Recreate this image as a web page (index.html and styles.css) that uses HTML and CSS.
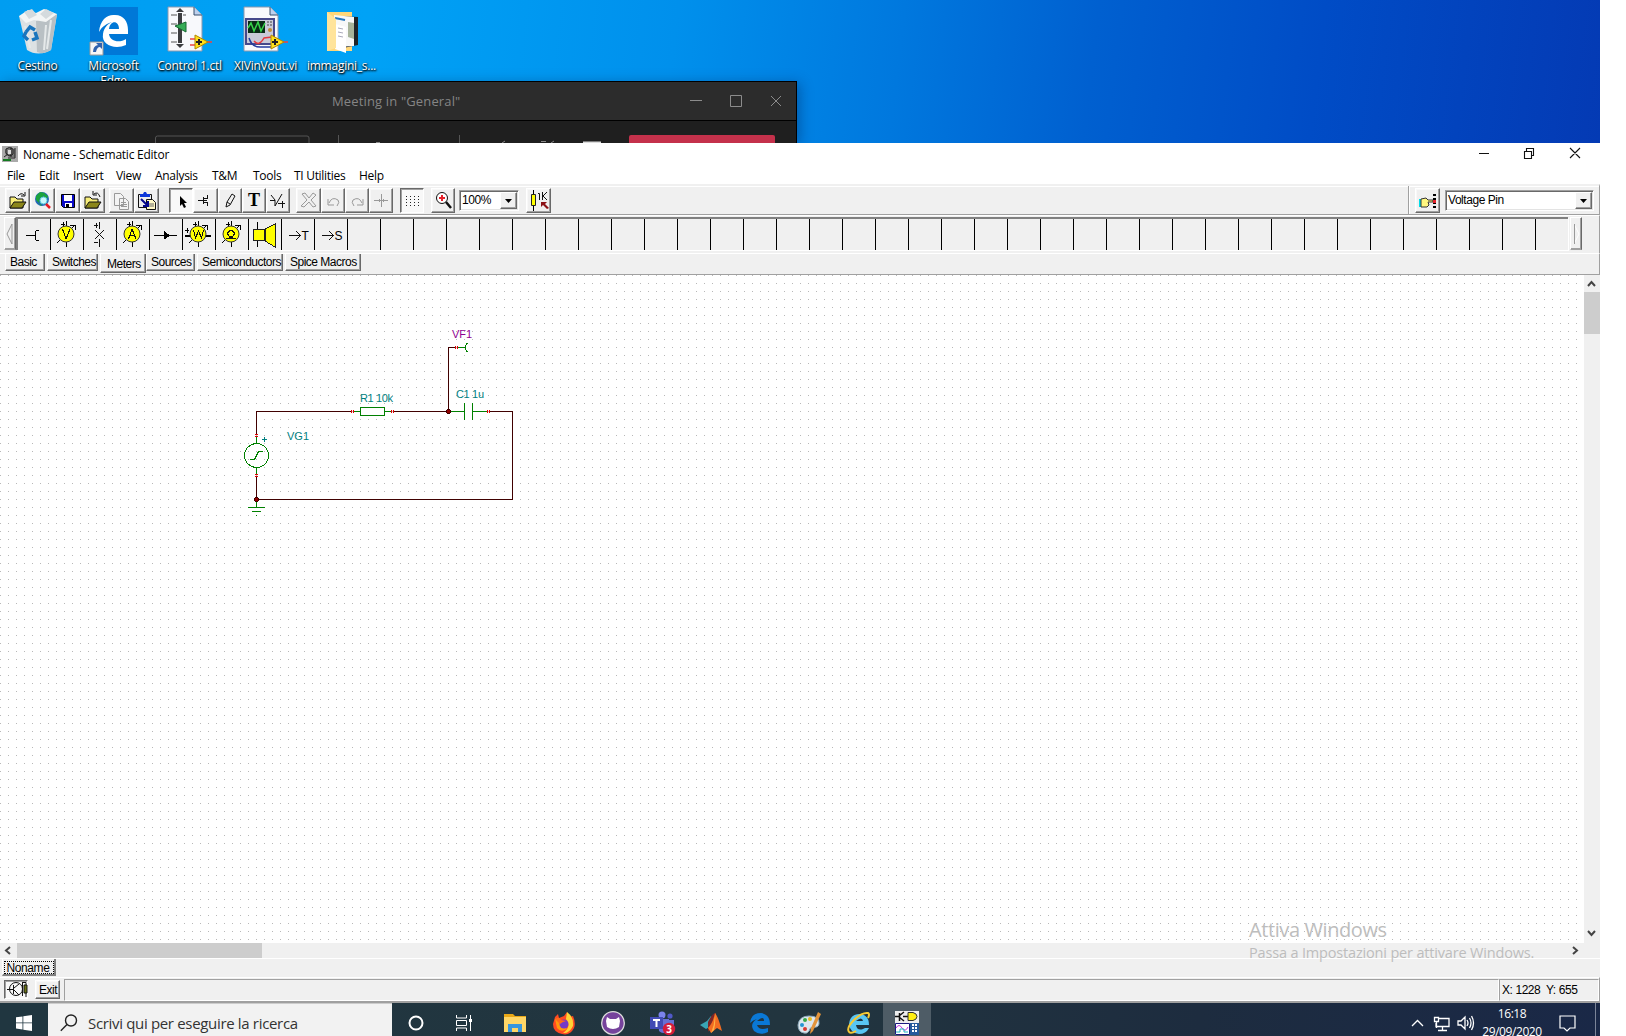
FILE: index.html
```html
<!DOCTYPE html>
<html lang="it">
<head>
<meta charset="utf-8">
<title>Noname - Schematic Editor</title>
<link rel="stylesheet" href="styles.css">
</head>
<body>
<div class="screen">
  <div class="desktop">
    <div class="shortcuts">
      <div class="shortcut"><svg viewBox="0 0 48 48"><path d="M5 9L43 7L37 43Q24 50 13 43Z" fill="#dce1e3"/><path d="M22 14L43 7L37 43Q30 48 23 45Z" fill="#b9c0c4"/><path d="M5 9L14 3L22 6L30 2L43 7L32 15L20 13L12 16Z" fill="#f3f5f5"/><path d="M10 5l8-3 5 6-8 4zM26 7l6-5 8 4-8 6z" fill="#d4dadd"/><path d="M11 19l5 22M32 18l-2 25M37 13l-4 29" stroke="#e5e9ea" stroke-width="2"/><path d="M12 25l4-5 5 3M21 25l2 6-5 2M14 33l-4-4 2-4" fill="none" stroke="#1975bd" stroke-width="3.500"/></svg><span>Cestino</span></div>
      <div class="shortcut"><svg viewBox="0 0 48 48"><path fill="#0078d7" d="M0 0h48v48H0z"/><path d="M9 25C10 12 18 7 25 8C34 8 38 15 38 23V27H19C20 35 30 36 36 32V38C25 43 11 38 13 27C14 20 18 17 22 15C18 16 12 19 9 25ZM19 22H29C29 13 20 13 19 22Z" fill="#fff"/><path d="M0 35h13v13H0z" fill="#f6f6f6" stroke="#999"/><path d="M3 45q0-6 5-7l-2-2h6v6l-2-2q-3 0-4 5z" fill="#3062ae"/></svg><span>Microsoft<br>Edge</span></div>
      <div class="shortcut"><svg viewBox="0 0 48 48"><path d="M2 0h26l8 8v36H2z" fill="#f8f9fc" stroke="#8d99ae"/><path d="M28 0v8h8" fill="#bed1ed" stroke="#38506f"/><path d="M5 8h6M5 17h6M5 26h6M5 35h6M17 8h3" stroke="#555"/><path d="M12 6h4v30h-4zM10 5l4-4 4 4zM10 37l4 4 4-4z" fill="#3c3d40"/><path d="M9 19l11-4v10z" fill="#36ad57" stroke="#176a32"/><path d="M24 32h7M24 38h6M40 35h6" stroke="#ed4242" stroke-width="1.5"/><path d="M29 28v14l13-7z" fill="#ffe11c" stroke="#b28800"/><path d="M30 35h6M33 32v6" stroke="#222" stroke-width="2"/></svg><span>Control 1.ctl</span></div>
      <div class="shortcut"><svg viewBox="0 0 48 48"><path d="M2 0h26l8 8v36H2z" fill="#f8f9fc" stroke="#8d99ae"/><path d="M28 0v8h8" fill="#bed1ed" stroke="#38506f"/><path d="M4 12h28v25H4z" fill="#c9cbd8" stroke="#46498b" stroke-width="2"/><path d="M6 14h17v12H6z" fill="#092c16"/><path d="M6 21l3-5 3 8 4-9 3 9 4-8" fill="none" stroke="#37d44b" stroke-width="1.5"/><path d="M25 15h5M25 18h5" stroke="#444" stroke-dasharray="2 1"/><circle cx="28" cy="23" r="2" fill="#c18c35"/><path d="M7 31q3 10 13 9h12" fill="none" stroke="#233b9e" stroke-width="1.5"/><path d="M12 34q5 6 10-3l8-1" fill="none" stroke="#e43a40" stroke-width="1.5"/><path d="M40 35h6" stroke="#ed4242" stroke-width="1.5"/><path d="M29 28v14l13-7z" fill="#ffe11c" stroke="#b28800"/><path d="M30 35h6M33 32v6" stroke="#222" stroke-width="2"/></svg><span>XIVinVout.vi</span></div>
      <div class="shortcut"><svg viewBox="0 0 48 48"><path d="M9 5h25v39H9z" fill="#ffd779"/><path d="M18 9l22 1v28l-20 4z" fill="#1f2429"/><path d="M16 8l20 2v29l-18 1z" fill="#f7f8f8"/><path d="M30 15l6 1v16l-6-2z" fill="#a8b49a"/><path d="M17 11l10 2" stroke="#2779c0" stroke-width="2"/><path d="M17 17l11 3v26l-11-4z" fill="#fff"/><path d="M20 21l5 1M20 25l5 1M20 29l5 1" stroke="#aab"/><path d="M9 5l9 7v29L9 44z" fill="#ffe49b"/></svg><span>immagini_s...</span></div>
    </div>
    <div class="meeting">
      <div class="meeting-title"><span>Meeting in "General"</span>
        <svg viewBox="0 0 92 14"><path d="M0 6.500h12M40.500 1.500h11v11h-11zM81 2l10 10M91 2L81 12" fill="none" stroke="#8c8c8c"/></svg>
      </div>
      <svg class="meeting-bar" viewBox="0 0 796 23"><path d="M155.500 23V17q0-2 2-2H307q2 0 2 2v6M338.500 14v9M459.500 14v9" fill="none" stroke="#555"/><path d="M629 23v-7q0-2 2-2h142q2 0 2 2v7z" fill="#c4314b"/><path d="M583 20.500h18v2h-18z" fill="#ddd"/><path d="M376 21.500h4M502 22l3-2M541 20.500h5M551 22l3-2" stroke="#888"/></svg>
    </div>
  </div>

  <div class="editor">
    <div class="titlebar">
      <svg class="app-icon" viewBox="0 0 16 16"><path d="M0 0h16v16H0z" fill="#aaa"/><path d="M3 5q1-4 5-3l5 1v8H8Q4 10 3 7z" fill="#777"/><path d="M4 3q3-3 7 0v5q-4 4-7-1zM9 1v10M13 2v10H6M2 11l4-3" stroke="#222" fill="none"/><path d="M6 4h3v4H6z" fill="#ddd"/><path d="M1 13h8v2H1z" fill="#137b20"/></svg>
      <span>Noname - Schematic Editor</span>
      <svg class="window-buttons" viewBox="0 0 102 14"><path d="M0 7.500h10M45.500 5.500h7v7h-7zM47.500 5V2.500h7v7H53M91 2l10 10M101 2L91 12" fill="none" stroke="#111" stroke-width="1.100"/></svg>
    </div>
    <div class="menu"><span>File</span><span>Edit</span><span>Insert</span><span>View</span><span>Analysis</span><span>T&amp;M</span><span>Tools</span><span>TI Utilities</span><span>Help</span></div>
    <div class="toolbar">
      <div class="group files">
        <i class="btn"><svg viewBox="0 0 24 24"><path d="M4 9h5l2 2h6v9H4z" fill="#f7ed78" stroke="#111"/><path d="M4 20l4-6h12l-4 6z" fill="#8b861a" stroke="#111"/><path d="M12 8q3-4 6-1M19 4v4h-4" fill="none" stroke="#111"/></svg></i>
        <i class="btn"><svg viewBox="0 0 24 24"><circle cx="11" cy="11" r="7" fill="#2466bc"/><path d="M5 8l4-4 5 1-2 4-3 1-1 5-3-3zM13 5l4 3-1 3-3-2zM7 15l4 2-1 1z" fill="#1ba33d"/><circle cx="12.500" cy="12.500" r="3.500" fill="#caf8fc" stroke="#5bcbd4"/><path d="M15 16l4 4" stroke="#e51b22" stroke-width="2.500"/></svg></i>
        <i class="btn"><svg viewBox="0 0 24 24"><path d="M5.500 6.500h13v13h-11l-2-2z" fill="#0b0bc9" stroke="#000"/><path d="M8 7h8v6H8zM9 15h7v4H9z" fill="#fff"/><path d="M10 16h3v3h-3z" fill="#000"/></svg></i>
        <i class="btn"><svg viewBox="0 0 24 24"><path d="M4 9h5l2 2h6v9H4z" fill="#f7ed78" stroke="#111"/><path d="M4 20l4-6h12l-4 6z" fill="#8b861a" stroke="#111"/><path d="M19 9q-2-6-6-3M12 3v4h4" fill="none" stroke="#111"/></svg></i>
      </div>
      <div class="group clip">
        <i class="btn"><svg viewBox="0 0 24 24"><g fill="#f3f3f3" stroke="#999"><path d="M5.500 5.500h6l3 3v9h-9zM10.500 10.500h6l3 3v8h-9z"/><path d="M12 14.500h5M12 16.500h6M12 18.500h6"/></g></svg></i>
        <i class="btn"><svg viewBox="0 0 24 24"><path d="M4.500 6.500h13v13h-13z" fill="#eee" stroke="#111"/><path d="M6 6h3l1-2h2l1 2h3v3H6z" fill="#0b36d9"/><path d="M12.500 11.500h6l3 3v7h-9z" fill="#fff9c7" stroke="#111"/><path d="M7 11l7 7M14 13v5H9" fill="none" stroke="#03078d" stroke-width="2"/><path d="M15 16h5M15 18h5" stroke="#666"/></svg></i>
      </div>
      <div class="group edit">
        <i class="btn down"><svg viewBox="0 0 24 24"><path d="M11 8v10l2-2 2 4 2-1-2-4h3z" fill="#000"/></svg></i>
        <i class="btn"><svg viewBox="0 0 24 24"><path d="M5 12.500h5M10.500 9v7M11 10.500h3M14.500 7v4M11 14.500h3M14.500 14v4M11 12.500h3" fill="none" stroke="#111"/></svg></i>
        <i class="btn"><svg viewBox="0 0 24 24"><path d="M8 19l1-5 5-8 3 2-5 9zM9 14l3 2" fill="none" stroke="#111"/></svg></i>
        <i class="btn"><b>T</b></i>
        <i class="btn"><svg viewBox="0 0 24 24"><path d="M4 12.500h5M5 7l4 5M9 18l7-12M12 15.500h7M16.500 13v7M9 12v6" fill="none" stroke="#111"/></svg></i>
      </div>
      <div class="group undo">
        <i class="btn"><svg viewBox="0 0 24 24"><path d="M6 6l3-1 4 5 4-5 3 2-5 5 5 6-3 1-4-5-5 5-3-1 6-6z" fill="none" stroke="#999"/></svg></i>
        <i class="btn"><svg viewBox="0 0 24 24"><path d="M7 11v6h6M8 15q3-7 9-3 2 2-1 6" fill="none" stroke="#999"/></svg></i>
        <i class="btn"><svg viewBox="0 0 24 24"><path d="M18 11v6h-6M17 15q-3-7-9-3-2 2 1 6" fill="none" stroke="#999"/></svg></i>
        <i class="btn"><svg viewBox="0 0 24 24"><path d="M5 12.500h14M12.500 6v13M10.500 11v3M14.500 11v3" stroke="#999"/></svg></i>
      </div>
      <div class="group grid"><i class="btn down"><svg viewBox="0 0 24 24"><path d="M6 8.500h14M6 11.500h14M6 14.500h14M6 17.500h14" stroke="#222" stroke-dasharray="1 3"/></svg></i></div>
      <div class="group zoom"><i class="btn"><svg viewBox="0 0 24 24"><circle cx="11" cy="10" r="5.500" fill="#fff" stroke="#111"/><path d="M8 10h6M11 7v6" stroke="#e5222b" stroke-width="2"/><path d="M15 14l5 6" stroke="#111" stroke-width="2.500"/></svg></i></div>
      <div class="combo percent"><span>100%</span><i><svg viewBox="0 0 7 4"><path d="M0 0h7L3.500 4z"/></svg></i></div>
      <div class="group value"><i class="btn"><svg viewBox="0 0 24 24"><path d="M7.500 2v21" stroke="#000"/><path d="M5.500 6.500h4v11h-4z" fill="#ff0" stroke="#222"/><path d="M12 5.500h1.500V12M16.500 4v8M21 4l-4 4 4 4" fill="none" stroke="#111"/><path d="M15 14h6l-2 2 4 4-2 1-4-4-2 2z" fill="#8b1117"/></svg></i></div>
      <div class="selector">
        <i class="btn"><svg viewBox="0 0 24 24"><path d="M4 11h2v8H4z" fill="#00dce8"/><path d="M6 11l5-1 2 2h5v2h-5l1 3-2 2H6z" fill="#fff780" stroke="#333"/><path d="M19.500 6v15" stroke="#000" stroke-width="3" stroke-dasharray="2 2"/><path d="M18 12h3v3h-3z" fill="#e5222b"/></svg></i>
        <div class="combo"><span>Voltage Pin</span><i><svg viewBox="0 0 7 4"><path d="M0 0h7L3.500 4z"/></svg></i></div>
      </div>
    </div>

    <div class="components">
      <div class="nudge"><svg viewBox="0 0 13 32"><path d="M8 6L3 16l5 10z" fill="none" stroke="#999"/></svg></div>
      <div class="strip">
        <svg viewBox="0 0 33 31"><path d="M9 17.500h9M22 12q-4 0-4 3v5q0 3 4 3" fill="none" stroke="#000"/></svg>
        <svg viewBox="0 0 33 31"><path d="M7 25L25 7M20 7h5v5M16.500 3v5M16.500 24v5M11 6.500h4M13.500 4v5" fill="none" stroke="#000"/><circle cx="16" cy="16" r="8" fill="#ff0" stroke="#333"/><path d="M12.500 11l3.500 10 4-10" fill="none" stroke="#111"/></svg>
        <svg viewBox="0 0 33 31"><path d="M16.500 4v7M16.500 21v8M12 12l9 9M21 12l-9 9M11 7.500h4M13.500 5v5M11 24.500h4" fill="none" stroke="#111"/></svg>
        <svg viewBox="0 0 33 31"><path d="M7 25L25 7M20 7h5v5M16.500 3v5M16.500 24v5M11 6.500h4M13.500 4v5" fill="none" stroke="#000"/><circle cx="16" cy="16" r="8" fill="#ff0" stroke="#333"/><path d="M12.500 21l3.500-10 4 10M14 17.500h4" fill="none" stroke="#111"/></svg>
        <svg viewBox="0 0 33 31"><path d="M5 17.500h23" stroke="#000"/><path d="M15 13l6 4.500-6 4z"/></svg>
        <svg viewBox="0 0 33 31"><path d="M7 25L25 7M20 7h5v5M16.500 3v5M16.500 24v5M11 6.500h4M13.500 4v5M3 12.500h4M5.500 10v5" fill="none" stroke="#000"/><path d="M3 18h26" stroke="#000" stroke-width="2"/><circle cx="16" cy="16" r="8" fill="#ff0" stroke="#333"/><path d="M11.500 12l2 8 3-7 3 7 2-8" fill="none" stroke="#111"/></svg>
        <svg viewBox="0 0 33 31"><path d="M7 25L25 7M20 7h5v5M16.500 3v5M16.500 24v5M11 6.500h4M13.500 4v5" fill="none" stroke="#000"/><circle cx="16" cy="16" r="8" fill="#ff0" stroke="#333"/><path d="M11 20.500h4v-2q-3-1-2-4 3-4 6 0 1 3-2 4v2h4" fill="none" stroke="#111" stroke-width="1.300"/></svg>
        <svg viewBox="0 0 33 31"><path d="M9.500 4v25" stroke="#000"/><path d="M5.500 11.500h11v11h-11zM17 11l10-5v23l-10-6z" fill="#ff0" stroke="#222"/></svg>
        <svg viewBox="0 0 33 31"><path d="M8 17.500h11M15 13l4.500 4.500-4.500 4.500" fill="none" stroke="#111"/><text x="20.500" y="22">T</text></svg>
        <svg viewBox="0 0 33 31"><path d="M8 17.500h11M15 13l4.500 4.500-4.500 4.500" fill="none" stroke="#111"/><text x="20.500" y="22">S</text></svg>
      </div>
      <div class="nudge right"><svg viewBox="0 0 13 32"><path d="M4 6l5 10-5 10" fill="none" stroke="#fff"/><path d="M4.500 6v20" stroke="#999"/></svg></div>
    </div>
    <div class="tabs"><span>Basic</span><span>Switches</span><span class="on">Meters</span><span>Sources</span><span>Semiconductors</span><span>Spice Macros</span></div>

    <div class="workspace">
      <svg class="canvas" viewBox="0 275 1584 668">
        <defs><pattern id="dots" x="0" y="275" width="8" height="8" patternUnits="userSpaceOnUse"><rect width="1" height="1" fill="#b8b8b8"/></pattern></defs>
        <rect y="275" width="1584" height="668" fill="url(#dots)"/>
        <g fill="none" stroke="#400000"><path d="M256.500 435V411.500H352M393 411.500H448.500V347.500H456M489 411.500H512.500V499.500H256.500V476"/></g>
        <g fill="none" stroke="#008000"><path d="M256.500 437v6M256.500 468v6M353 411.500h7M385 411.500h7M450 411.500h14M473 411.500h14M458 347.500h7M464.500 403v17M472.500 403v17M256.500 500v7M248 507.500h17M252 511.500h9M256 515.500h1M468 343.500h-1l-1.500 2v4l1.500 2h1"/><path d="M360.500 407.500h24v8h-24z" fill="#fff"/><path d="M250 459.500h4.500l4-8h4.500"/><circle cx="256.500" cy="455.500" r="12"/></g>
        <g stroke="#e00000"><path d="M351.500 410v3M353.500 410v3M391.500 410v3M393.500 410v3M455.500 346v3M457.500 346v3M487.500 410v3M489.500 410v3M255 434.500h3M255 436.500h3M255 474.500h3M255 476.500h3"/></g>
        <g fill="#900000" stroke="#400000"><circle cx="448.500" cy="411.500" r="2"/><circle cx="256.500" cy="499.500" r="2"/></g>
        <path d="M262 439.500h5M264.500 437v5" stroke="#008080"/>
        <g class="net"><text x="360" y="402" textLength="33">R1 10k</text><text x="456" y="398" textLength="28">C1 1u</text><text x="287" y="440" textLength="22">VG1</text><text class="probe" x="452" y="338" textLength="20">VF1</text></g>
      </svg>
      <div class="vscroll"><svg viewBox="0 0 16 17"><path d="M4 11l3.500-4 3.500 4" /></svg><i></i><svg viewBox="0 0 16 17"><path d="M4 5l3.500 4L11 5"/></svg></div>
    </div>
    <div class="hscroll"><svg viewBox="0 0 17 16"><path d="M10 4L6 7.500l4 3.500"/></svg><i></i><svg viewBox="0 0 17 16"><path d="M6 4l4 3.500L6 11"/></svg></div>
    <div class="sheets"><span>Noname</span></div>
    <div class="status">
      <i class="btn down"><svg viewBox="0 0 24 18"><circle cx="12" cy="9" r="6.500" fill="none" stroke="#111"/><path d="M3 9.500h6M9.500 5v9M10 8l5-4M10 10l5 5M18 2.500h4V17M18.500 3v13" fill="none" stroke="#111"/><path d="M20 5h3v8h-3z" fill="#6c7416" stroke="#111"/></svg></i>
      <i class="btn exit">Exit</i>
      <div class="message"></div><div class="coords">X: 1228&nbsp; Y: 655</div>
    </div>
    <div class="watermark"><p>Attiva Windows</p><small>Passa a Impostazioni per attivare Windows.</small></div>
  </div>

  <div class="taskbar">
    <div class="start"><svg viewBox="0 0 16 16"><path d="M0 2.300l6.500-.9v6.100H0zM7.300 1.300L16 0v7.500H7.300zM0 8.300h6.500v6.100L0 13.500zM7.300 8.300H16V16l-8.700-1.300z" fill="#fff"/></svg></div>
    <div class="search"><svg viewBox="0 0 18 18"><circle cx="11" cy="6.500" r="5.500" fill="none" stroke="#222" stroke-width="1.400"/><path d="M7 10.500L.8 16.700" stroke="#222" stroke-width="1.400"/></svg><span>Scrivi qui per eseguire la ricerca</span></div>
    <div class="apps">
      <svg viewBox="0 0 24 24"><circle cx="12" cy="12" r="6.500" fill="none" stroke="#fff" stroke-width="2"/></svg>
      <svg viewBox="0 0 24 24"><path d="M3.500 4v3h10V4M3.500 20v-3h10v3M3.500 9.500h10v5h-10zM17.500 4v16" fill="none" stroke="#fff"/><path d="M16 8h3v3h-3z" fill="#fff"/></svg>
      <svg viewBox="0 0 24 24"><path d="M1 3h9l2 2h11v16H1z" fill="#e9a817"/><path d="M1 6h22v15H1z" fill="#ffd667"/><path d="M5 13h14v8h-4v-4H9v4H5z" fill="#3796df"/></svg>
      <svg viewBox="0 0 24 24"><path d="M3 6l3-3 1 4 5-2 3-4 2 5 4-1q3 7 1 12-4 8-12 6Q1 21 1 13z" fill="#ff4a22"/><path d="M15 1q7 5 6 14-4 8-10 7 9-6 3-14z" fill="#ffd235"/><path d="M3 8l6 2 5-1-4 4 5 5q-6 4-10-1z" fill="#ff980e"/><circle cx="12" cy="13" r="4.500" fill="#7539c6"/><path d="M3 8q4-3 6 1l5 1q-4 1-6 3z" fill="#ff6a19"/></svg>
      <svg viewBox="0 0 24 24"><circle cx="12" cy="12" r="11.300" fill="#76439c" stroke="#ddd" stroke-width="1.300"/><path d="M6 6l3 2h6l3-2 1 4-1 6q-6 4-12 0l-1-6z" fill="#fff"/></svg>
      <svg viewBox="0 0 24 24"><circle cx="12" cy="4" r="3.500" fill="#7b83eb"/><circle cx="20" cy="5" r="2.600" fill="#5059c9"/><path d="M8 8h11v10q-5 7-10 2zM18 9h6v8q-3 3-6 1z" fill="#6770d4"/><path d="M0 6h13v12H0z" fill="#424bb4"/><path d="M3 9h7M6.500 9v7" stroke="#fff" stroke-width="2"/><circle cx="19" cy="18" r="6.200" fill="#d51d3b"/><text class="badge" x="19" y="21.500">3</text></svg>
      <svg viewBox="0 0 24 24"><path d="M1 14l7-4 4-5 3 8-8 5z" fill="#3aa5b5"/><path d="M9 11q5-10 8-9l-5 15-3 4z" fill="#7d2628"/><path d="M16 2q3 3 7 18l-5-3-6 5-3-5q5-5 7-15z" fill="#f36c21"/><path d="M16 2q1 9-1 17l-3 3q4-9 4-20z" fill="#ffb145"/></svg>
      <svg viewBox="0 0 24 24"><path d="M2 12Q3 2 13 2q9 1 9 12H9q2 6 11 3v4q-8 4-14-1-5-7 3-12-4 1-7 4zM9 10h7q0-6-7 0z" fill="#0a78d5"/></svg>
      <svg viewBox="0 0 24 24"><path d="M1 14Q2 5 12 5q11 0 10 8-1 4-6 3-3 0-4 4-2 3-5 2-6-1-6-8z" fill="#dce7ef" stroke="#8da9ba"/><circle cx="5" cy="14" r="2" fill="#2596d3"/><circle cx="8" cy="9" r="2" fill="#36a849"/><circle cx="13" cy="8" r="2" fill="#e8bb24"/><circle cx="8" cy="18" r="2" fill="#d83a32"/><path d="M21 1l3 2-8 17-3 3 1-6z" fill="#e3943b"/></svg>
      <svg viewBox="0 0 24 24"><path d="M3 13Q4 3 14 3q9 1 9 11H10q1 6 7 4l2-1h4q-3 6-10 6-9-1-10-10zM10 10h7q-1-5-7 0z" fill="#58c6f4"/><path d="M3 21q-3-4 5-12T22 2q2 1 0 5M3 21q2 2 7-1" fill="none" stroke="#f6ca35" stroke-width="2"/></svg>
      <div class="active"><svg viewBox="0 0 24 24"><path d="M0 0h24v24H0z" fill="#eee"/><path d="M.5 12.500h14v11H.5z" fill="#fff" stroke="#1b1b80"/><path d="M1 17q3-5 6 0t6-1" stroke="#c12de0" fill="none"/><path d="M1 21h4v-3h4v3h4" stroke="#23b8c2" fill="none"/><path d="M0 5.500h4M4.500 2v8M4 5l5-4M4 6l5 4M8 5.500h6" stroke="#111" fill="none" stroke-width="1.500"/><path d="M13 1.500h5q4 1 4 4t-4 4h-5z" fill="#ffef12" stroke="#333"/><path d="M15 12h9v12h-9z" fill="#265a9c"/><path d="M17 14h5M17 17h5M17 20h5" stroke="#fff" stroke-width="2" stroke-dasharray="2 1"/></svg></div>
    </div>
    <div class="tray">
      <svg class="status-icons" viewBox="0 0 64 18"><g fill="none" stroke="#fff" stroke-width="1.300"><path d="M1 12l5.500-5.500L12 12M28 4.500h10v8H25V9M31.500 13v3M27 16.500h9M23.500 3.500h4v4h-4zM25.500 8v6M47 7h3l4-4v12l-4-4h-3zM56 6q2 3 0 6M58.500 4q3 5 0 10M60.500 2q4 7 0 14"/></g></svg>
      <div class="clock">16:18<br>29/09/2020</div>
      <svg class="notify" viewBox="0 0 18 18"><path d="M1 2h15v12h-5l-3 3-3-3H1z" fill="none" stroke="#fff" stroke-width="1.200"/></svg>
    </div>
  </div>
</div>
</body>
</html>
```
FILE: styles.css
```css
* { box-sizing: border-box; }
body { margin: 0; background: #fff; overflow: hidden; font-family: "Open Sans", "Noto Sans", sans-serif; }
svg { display: block; flex: none; overflow: visible; }
i { font-style: normal; }
.screen { width: 1600px; height: 1036px; overflow: hidden; display: flex; flex-direction: column; }

/* desktop */
.desktop { height: 143px; overflow: hidden; flex: none; background: linear-gradient(97deg, #009df1 0, #00a2f6 23%, #0090ec 42%, #0078de 56%, #0060d0 68%, #004cc6 82%, #043ab4 100%); }
.shortcuts { height: 81px; overflow: hidden; display: flex; }
.shortcut { width: 76px; padding-top: 7px; display: flex; flex-direction: column; align-items: center; }
.shortcut svg { width: 48px; height: 48px; }
.shortcut span { color: #fff; font-size: 12px; line-height: 15px; text-align: center; white-space: nowrap; margin: 3px 1px 0 0; letter-spacing: -.25px; text-shadow: 1px 1px 2px #000, 0 1px 2px #000; }
.meeting { width: 797px; height: 62px; border: 1px solid #000; border-width: 1px 1px 0 0; background: #1f1f1f; box-shadow: 3px 2px 12px rgba(0,20,70,.35); }
.meeting-title { height: 39px; border-bottom: 1px solid #000; background: #2c2c2c; display: flex; align-items: center; color: #858585; font-size: 13px; padding: 0 14px 0 332px; justify-content: space-between; }
.meeting-title span { letter-spacing: .15px; padding-bottom: 1px; }
.meeting-title svg { width: 92px; height: 14px; }
.meeting-bar { width: 796px; height: 23px; }

/* editor window */
.editor { position: relative; height: 860px; flex: none; display: flex; flex-direction: column; background: #f0f0f0; color: #000; }
.titlebar { height: 23px; background: #fff; display: flex; align-items: center; padding: 0 19px 0 2px; font-size: 12px; letter-spacing: -.24px; }
.app-icon { width: 16px; height: 16px; margin: -1px 5px 0 0; }
.window-buttons { width: 102px; height: 14px; margin: -3px 0 0 auto; }
.menu { height: 18px; background: #fff; display: grid; grid-template-columns: 32px 34px 43px 39px 57px 41px 41px 65px 60px; padding-left: 7px; font-size: 12px; line-height: 19px; letter-spacing: -.3px; white-space: nowrap; }
.toolbar { height: 31px; border-top: 2px solid #f0f0f0; border-bottom: 1px solid #a0a0a0; border-right: 1px solid #a0a0a0; box-shadow: inset 0 1px #fff; display: flex; align-items: center; padding-left: 5px; }
.group { display: flex; }
.btn { width: 24px; height: 25px; background: #f0f0f0; border: 1px solid; border-color: #fff #696969 #696969 #fff; box-shadow: inset -1px -1px #a0a0a0, inset 1px 1px #f8f8f8; flex: none; display: block; }
.btn svg { width: 24px; height: 24px; margin: -1px; }
.files svg { margin-left: 0; }
.btn.down { background: #f8f8f8; border-color: #696969 #fff #fff #696969; box-shadow: inset 1px 1px #a0a0a0; }
.btn b { display: block; text-align: center; font: bold 18px/23px "Liberation Serif", serif; }
.files .btn, .clip .btn, .value .btn { width: 25px; }
.clip { margin-left: 4px; }
.edit { margin-left: 10px; }
.edit .btn:nth-child(2) { width: 25px; }
.undo { margin-left: 6px; }
.undo .btn:first-child { width: 25px; }
.grid { margin-left: 7px; }
.zoom { margin-left: 7px; }
.value { margin-left: 7px; }
.combo { height: 21px; background: #fff; border: 1px solid; border-color: #a0a0a0 #fff #fff #a0a0a0; box-shadow: inset 1px 1px #696969, inset -1px -1px #e3e3e3; display: flex; justify-content: space-between; padding: 1px 1px 1px 2px; font: 12px/16px "Liberation Sans", sans-serif; letter-spacing: -.45px; }
.combo i { width: 17px; height: 17px; background: #f0f0f0; border: 1px solid; border-color: #fff #696969 #696969 #fff; box-shadow: inset -1px -1px #a0a0a0; padding: 6px 4px; }
.combo i svg { width: 7px; height: 4px; }
.percent { width: 60px; margin-left: 4px; }
.selector { margin-left: auto; width: 191px; height: 28px; border-left: 1px solid #a0a0a0; box-shadow: inset 1px 0 #fff; padding-left: 6px; display: flex; align-items: center; gap: 5px; }
.selector .combo { width: 149px; margin-top: 1px; }
.selector .btn { width: 25px; }

.components { height: 38px; padding: 1px 0 0 4px; display: flex; border-top: 1px solid #fff; border-right: 1px solid #a0a0a0; }
.nudge { width: 12px; height: 33px; border: 1px solid; border-color: #fff #696969 #a0a0a0 #fff; box-shadow: inset -1px -1px #a0a0a0; }
.nudge svg { width: 13px; height: 32px; margin-left: -1px; }
.nudge.right { margin-left: 2px; }
.strip { width: 1552px; height: 33px; border: solid #808080; border-width: 2px 0 0 2px; box-shadow: 1px 1px #fff; display: flex; background: repeating-linear-gradient(90deg, #f0f0f0 0 32px, #000 32px 33px); }
.strip svg { width: 33px; height: 31px; margin: -1px 1px 0 -1px; }
.strip path { shape-rendering: crispEdges; }
.strip text { font: 12px "Liberation Sans", sans-serif; }
.tabs { height: 22px; padding-left: 5px; border-top: 1px solid #fff; border-bottom: 1px solid #a0a0a0; border-right: 1px solid #a0a0a0; display: grid; grid-template-columns: 42px 53px 46px 51px 88px 78px; font: 12px/17px "Liberation Sans", sans-serif; letter-spacing: -.5px; white-space: nowrap; }
.tabs span { height: 17px; margin-right: 2px; padding-left: 4px; border-left: 1px solid #fff; border-right: 1px solid #696969; border-bottom: 1px solid #696969; box-shadow: inset -1px -1px #a0a0a0; }
.tabs .on { height: 19px; line-height: 20px; margin-right: 0; padding-left: 6px; }

.workspace { height: 668px; display: flex; background: #fff; }
.canvas { width: 1584px; height: 668px; shape-rendering: crispEdges; }
.net text { font: 11px "Liberation Sans", sans-serif; fill: #008080; }
.net .probe { fill: #900090; }
.vscroll { width: 16px; background: #f0f0f0; display: flex; flex-direction: column; }
.vscroll svg { width: 16px; height: 17px; }
.vscroll i { height: 42px; background: #cdcdcd; margin-bottom: auto; }
.vscroll path, .hscroll path { fill: none; stroke: #444; stroke-width: 2; }
.hscroll { height: 15px; display: flex; padding-right: 16px; }
.hscroll svg { width: 17px; height: 16px; }
.hscroll i { width: 245px; background: #cdcdcd; margin-right: auto; }
.sheets { height: 19px; border-top: 1px solid #fff; display: flex; padding-left: 2px; font: 12px/19px "Liberation Sans", sans-serif; letter-spacing: -.4px; }
.sheets span { width: 54px; height: 17px; padding-right: 1px; text-align: center; border-left: 1px solid #fff; border-right: 2px solid #808080; border-bottom: 2px solid #808080; background: linear-gradient(#f0f0f0, #f0f0f0) padding-box; outline: 1px dotted #000; outline-offset: -3px; }
.status { height: 26px; border-top: 1px solid #fff; border-bottom: 2px solid #a0a0a0; border-right: 1px solid #a0a0a0; display: flex; align-items: center; padding-left: 4px; font: 12px/18px "Liberation Sans", sans-serif; letter-spacing: -.5px; }
.status .btn { height: 19px; }
.status .btn svg { height: 18px; }
.status .exit { width: 25px; margin: 0 4px 0 7px; padding-left: 3px; }
.message, .coords { height: 22px; border: 1px solid; border-color: #a0a0a0 #fff #fff #a0a0a0; }
.message { flex: 1; }
.coords { width: 100px; padding: 1px 2px; white-space: nowrap; letter-spacing: -.43px; }
.watermark { position: absolute; left: 1249px; top: 774px; color: #bdbdbd; white-space: nowrap; }
.watermark p { margin: 0; font-size: 20px; line-height: 26px; letter-spacing: -.4px; }
.watermark small { display: block; font-size: 14.500px; line-height: 20px; letter-spacing: -.17px; }

/* taskbar */
.taskbar { height: 33px; flex: none; display: flex; background: linear-gradient(90deg, #203640 0, #22353f 50%, #1d2c3f 75%, #1a2847 100%); }
.start { width: 48px; padding: 12px 0 0 16px; }
.start svg { width: 16px; height: 16px; }
.search { width: 344px; background: #f2f2f2; border-top: 1px solid #ccc; color: #333; display: flex; padding: 10px 0 0 12px; gap: 10px; font-size: 15px; line-height: 18px; }
.search svg { width: 18px; height: 18px; }
.search span { letter-spacing: -.33px; white-space: nowrap; }
.apps { display: grid; grid-template-columns: 48px 50px repeat(9, 49px); justify-items: center; }
.apps > svg, .active svg { width: 24px; height: 24px; margin-top: 8px; }
.active { width: 48px; height: 33px; background: #4e5c66; display: flex; justify-content: center; }
.badge { font: bold 10px "Open Sans", sans-serif; fill: #fff; text-anchor: middle; }
.tray { margin-left: auto; width: 185px; display: flex; border-right: 1px solid #7b8498; margin-right: 4px; }
.status-icons { width: 64px; height: 18px; margin-top: 11px; }
.clock { width: 64px; margin: 2px 15px 0 5px; text-align: center; color: #fff; font-size: 12px; line-height: 18px; letter-spacing: -.42px; }
.notify { width: 18px; height: 18px; margin-top: 11px; }
```
